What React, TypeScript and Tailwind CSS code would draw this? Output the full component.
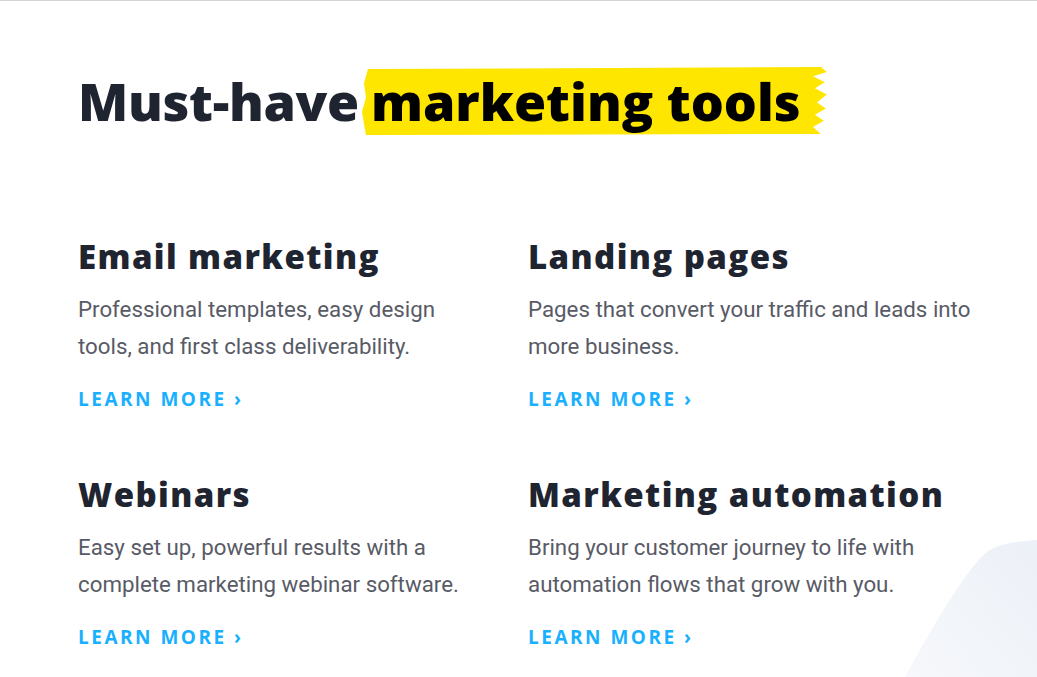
import React from "react";

const items = [
  { title: "Email marketing", body: ["Professional templates, easy design", "tools, and first class deliverability."] },
  { title: "Landing pages", body: ["Pages that convert your traffic and leads into", "more business."] },
  { title: "Webinars", body: ["Easy set up, powerful results with a", "complete marketing webinar software."] },
  { title: "Marketing automation", body: ["Bring your customer journey to life with", "automation flows that grow with you."] },
];

function Highlight() {
  return (
    <svg className="absolute left-0 top-0 h-full w-full" viewBox="0 0 472 67" preserveAspectRatio="none">
      <path
        d="M6 2 L464 0 L470 5 L456 9 L468 15 L458 21 L470 27 L460 35 L469 41 L458 47 L467 53 L456 59 L464 66 L4 67 L2 56 L0 44 L4 30 L2 16 Z"
        fill="#ffe600"
      />
    </svg>
  );
}

export default function App() {
  return (
    <div className="relative h-[677px] w-[1037px] overflow-hidden border-t border-[#d4d4d4] bg-white">
      <svg className="absolute bottom-0 right-0" width="140" height="140" viewBox="0 0 140 140">
        <defs>
          <linearGradient id="blob" x1="0" y1="1" x2="1" y2="0">
            <stop offset="0" stopColor="#f6f8fb" />
            <stop offset="1" stopColor="#ecf0f7" />
          </linearGradient>
        </defs>
        <path d="M8 140 C30 100 68 32 90 15 C100 8 112 5 140 3 L140 140 Z" fill="url(#blob)" />
      </svg>
      <div className="relative pl-[78px] pt-[66px]">
        <h1
          className="flex items-center text-[52px] font-extrabold leading-[68px] text-[#1f2530]"
          style={{ fontFamily: "'Open Sans', sans-serif" }}
        >
          <span className="tracking-[-0.3px]">Must-have</span>
          <span className="relative ml-[3px] pl-[9px] pr-[28px] text-black">
            <Highlight />
            <span className="relative">marketing tools</span>
          </span>
        </h1>
        <div className="mt-[100px] grid w-[900px] grid-cols-[450px_450px] gap-y-[61px]">
          {items.map((it) => (
            <div key={it.title} className="flex flex-col">
              <h2
                className="text-[33px] font-extrabold leading-[44px] tracking-[1.4px] text-[#1f2530]"
                style={{ fontFamily: "'Open Sans', sans-serif" }}
              >
                {it.title}
              </h2>
              <p
                className="mt-[12px] text-[22.3px] leading-[37px] text-[#585b66]"
                style={{ fontFamily: "Roboto, sans-serif" }}
              >
                {it.body[0]}
                <br />
                {it.body[1]}
              </p>
              <a
                className="mt-[21px] text-[19px] font-bold leading-[26px] tracking-[2.5px] text-[#19b0ff]"
                style={{ fontFamily: "'Open Sans', sans-serif" }}
              >
                LEARN MORE ›
              </a>
            </div>
          ))}
        </div>
      </div>
    </div>
  );
}
